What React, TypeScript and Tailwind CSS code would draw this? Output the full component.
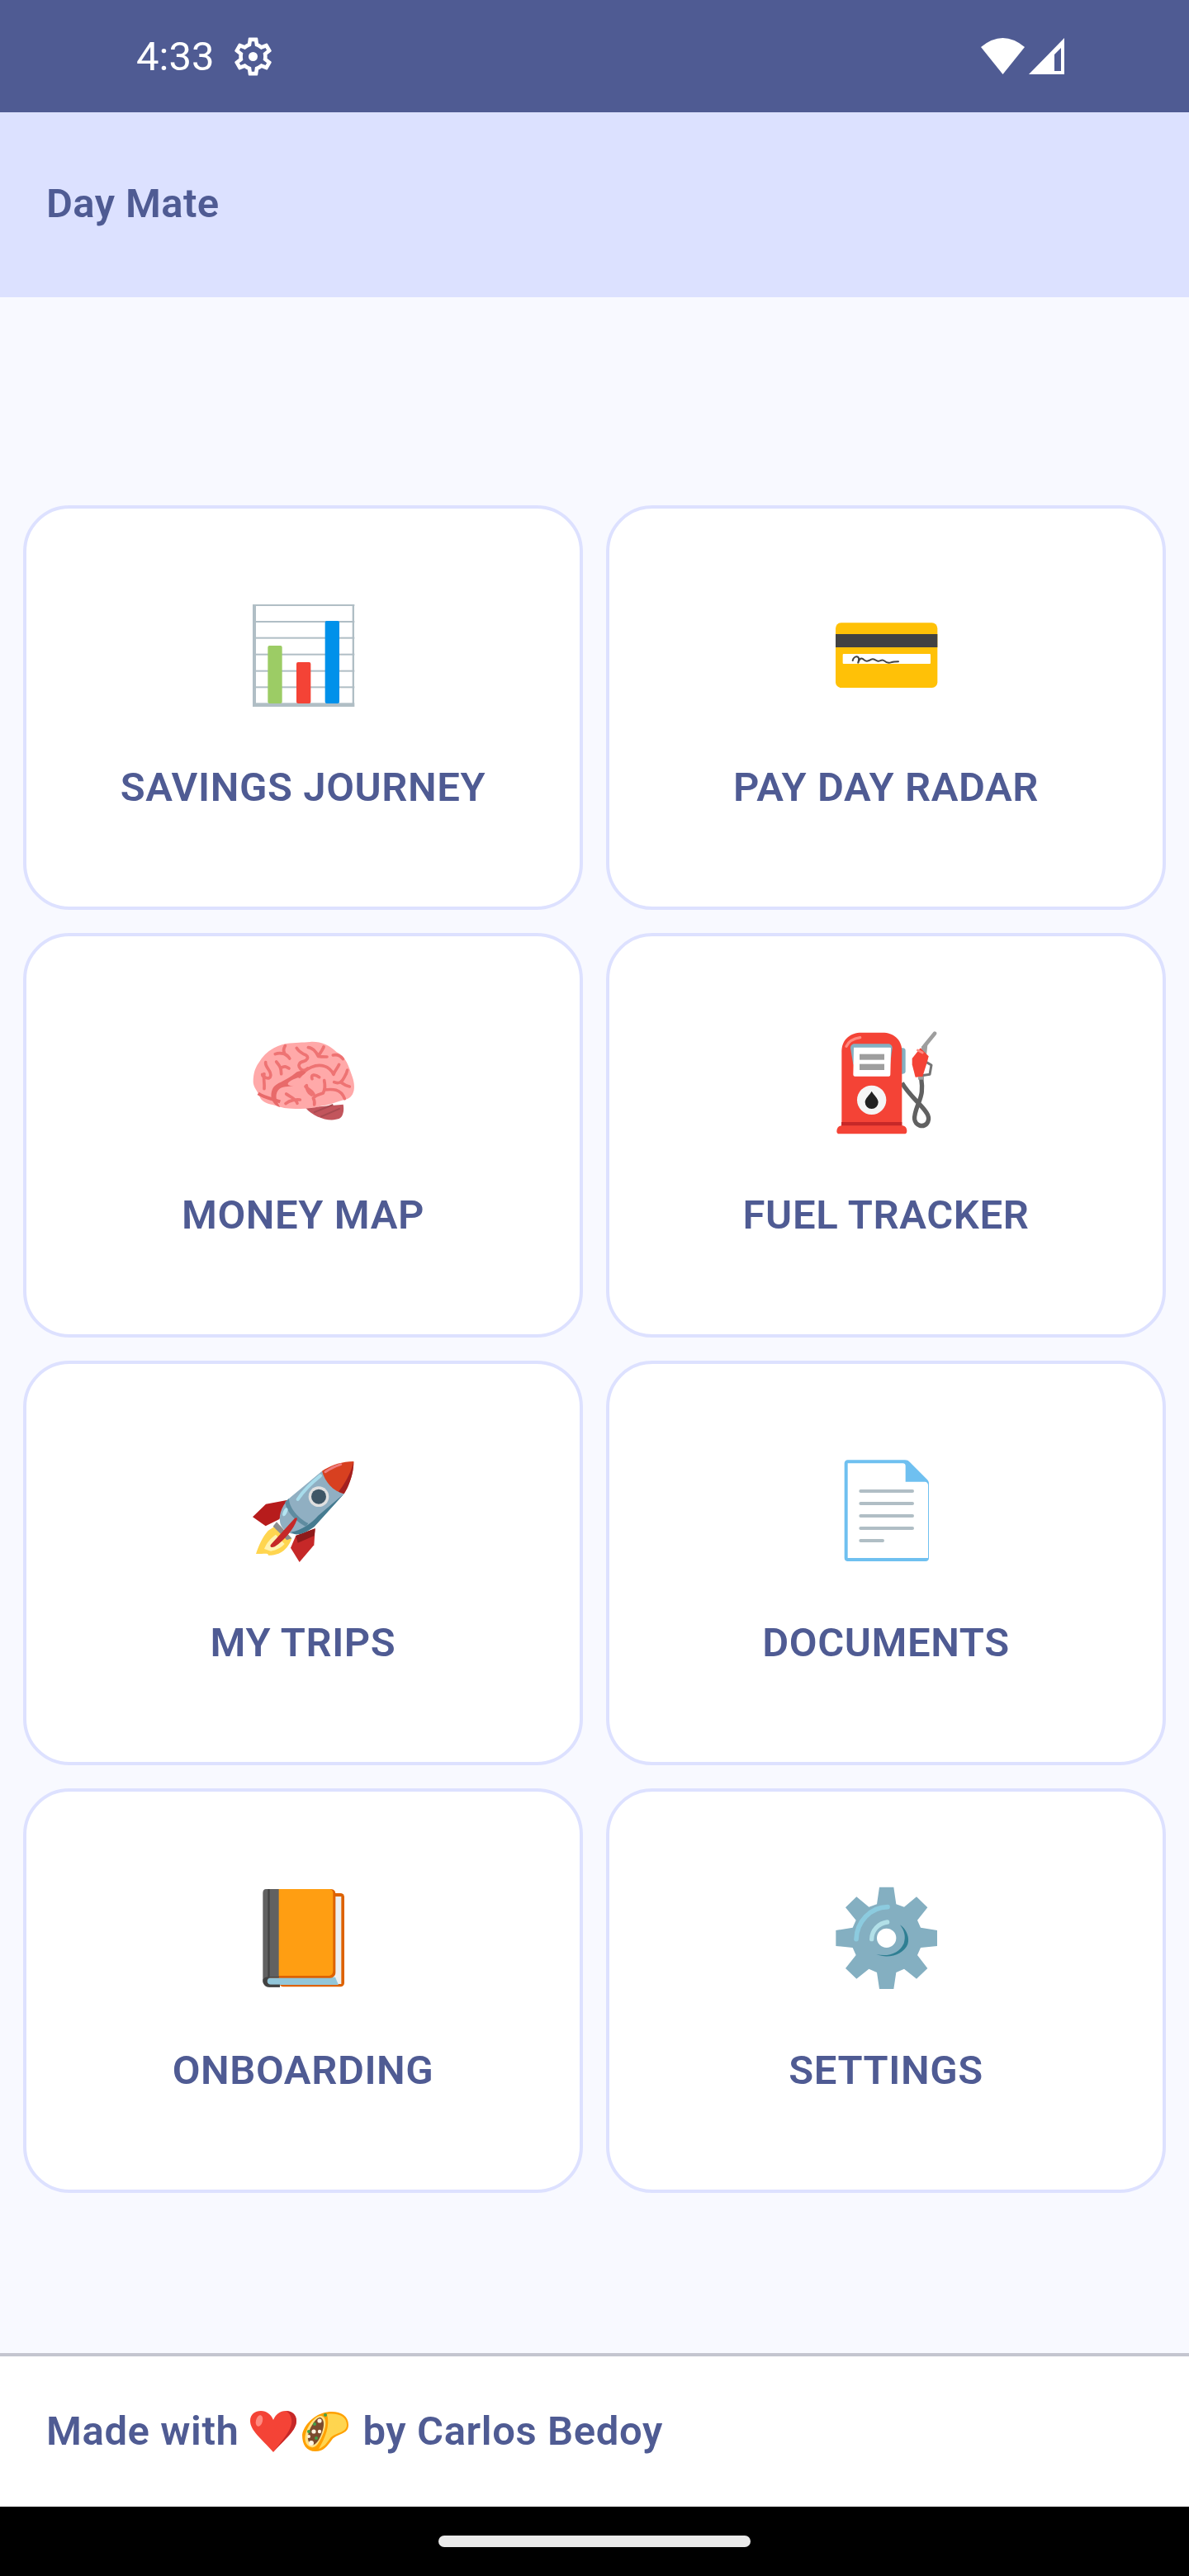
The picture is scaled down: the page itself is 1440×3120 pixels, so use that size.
import type { ReactNode } from 'react'

// emoji drawings: coordinates are 3x pixels, the viewBox picks the 126px square
function Emoji({ box, children }: { box: string; children: ReactNode }) {
  return (
    <svg viewBox={box} className="h-[126px] w-[126px] shrink-0">
      {children}
    </svg>
  )
}

const ChartIcon = () => (
  <Emoji box="102 63 378 378">
    <rect x="111" y="69" width="363" height="363" fill="#fff" />
    <g fill="#B0BEC5">
      <rect x="108" y="66" width="370" height="6" />
      <rect x="108" y="66" width="12" height="372" />
      <rect x="470" y="66" width="7" height="372" />
      <rect x="108" y="126" width="370" height="6" />
      <rect x="108" y="185" width="370" height="6" />
      <rect x="108" y="245" width="370" height="6" />
      <rect x="108" y="305" width="370" height="6" />
      <rect x="108" y="364" width="370" height="6" />
      <rect x="108" y="424" width="370" height="14" />
    </g>
    <rect x="163" y="216" width="52" height="210" rx="6" fill="#9CCC65" />
    <rect x="267" y="276" width="52" height="150" rx="6" fill="#F44336" />
    <rect x="371" y="126" width="52" height="300" rx="6" fill="#0091EA" />
  </Emoji>
)

const CardIcon = () => (
  <Emoji box="90 63 378 378">
    <rect x="96" y="133" width="370" height="236" rx="20" fill="#FFC107" />
    <rect x="96" y="174" width="370" height="48" fill="#424242" />
    <rect x="122" y="246" width="319" height="36" rx="3" fill="#fff" />
    <path
      d="M158 270c2-12 14-18 20-12s-2 22 0 20c4-16 12-20 22-10s18 2 26-2 16 4 24 6 14-10 24 0 20 6 26 4 14-2 24-2"
      fill="none"
      stroke="#424242"
      strokeWidth="6"
      strokeLinecap="round"
    />
  </Emoji>
)

const BrainIcon = () => (
  <Emoji box="102 57 378 378">
    <path d="M300 335c30 35 90 55 125 38 12-8 16-30 12-50z" fill="#C2555C" />
    <path d="M330 352l70-28M355 368l70-30M310 338l60-18" stroke="#A84A50" strokeWidth="6" fill="none" />
    <path
      d="M110 240c0-30 8-52 20-68 22-40 60-62 100-70 36-4 60-4 86-6 40-4 76 16 96 36 34 14 46 54 58 90 12 34 10 70-20 82-40 10-60 22-100 26-30 10-70 10-100 8-30 0-40-6-70-14-20-4-44-14-48-34-6-14-22-30-22-50z"
      fill="#FFA9A9"
    />
    <path d="M128 283c20 14 50 20 80 30" stroke="#E86A6A" strokeWidth="12" fill="none" />
    <g fill="none" stroke="#EE7373" strokeWidth="11" strokeLinecap="round" strokeLinejoin="round">
      <path d="M155 170c-2 20 22 30 18 50-2 16-30 4-30-6" />
      <path d="M150 212c-4 16 2 34 0 54" />
      <path d="M190 140c20-8 44 0 52 16M226 110c-8 14-8 26 6 36" />
      <path d="M194 168c10 12 18 20 18 44M212 190c12-8 18-4 28 2" />
      <path d="M268 118c8 14 20 20 34 26 12 8 2 20-8 22-20 4-22 18-12 28 8 6 14 8 26-2" />
      <path d="M310 116c16 2 28 14 36 32 6-12 14-18 20-34M346 148c10 2 20 2 32 2" />
      <path d="M400 144c16-4 30 4 36 14" />
      <path d="M404 242c18 8 30-2 36-16 6-10 10-16 12-28M430 244c8 6 18 12 30 14" />
      <path d="M278 222c24-30 60-48 90-38 14 4 26 14 34 30M402 214c4-14 14-22 20-36" />
      <path d="M324 230c-6-16 10-18 26-6M368 236c4 20 4 30-4 46M364 282c-16 6-26 6-36 18M368 270c30-4 60-4 74 32M328 300c6 10 6 14 4 24M304 254c0 16 8 28 18 34" />
    </g>
    <path
      d="M176 300c-2-20 2-36 14-46 14-12 44-20 72-44 14-12 30-10 40-4-18 20-42 20-60 34-14 10-2 18 18 14-24 6-46 0-60 18-12 18-6 40 8 60-14 0-26-14-32-32z"
      fill="#E86A6A"
    />
    <g fill="none" stroke="#EE7373" strokeWidth="11" strokeLinecap="round">
      <path d="M230 285c12 10 34 14 40 34M280 306c-12-2-36 0-52 14M300 258c10 12 22 12 30 28" />
    </g>
  </Emoji>
)

const FuelIcon = () => (
  <Emoji box="90 57 378 378">
    <rect x="300" y="118" width="50" height="94" rx="10" fill="#84B0C1" />
    <path d="M337 245c20 34 50 62 70 84 22 24 36 44 20 64-14 14-40 8-44-16-4-28 24-70 26-100 2-20 0-36-2-50" fill="none" stroke="#616161" strokeWidth="16" />
    <path d="M418 112l38-47" stroke="#9E9E9E" strokeWidth="14" strokeLinecap="round" fill="none" />
    <path d="M408 112l22-6-4 40-20-8z" fill="#9E9E9E" />
    <path d="M416 164l28 16-6 34-30 4" fill="none" stroke="#757575" strokeWidth="9" strokeLinejoin="round" />
    <path d="M374 156l30-38 30 30-4 16-18 58-26 2-12-46z" fill="#F44336" />
    <path d="M396 222h21v11h-21z" fill="#9E9E9E" />
    <path d="M394 126l18 9" stroke="#FF8A80" strokeWidth="8" strokeLinecap="round" />
    <path d="M118 402V130c0-42 30-68 72-68h76c42 0 71 26 71 68v272z" fill="#F44336" />
    <path d="M135 112c8-18 24-28 50-32" stroke="#FF8A80" strokeWidth="10" strokeLinecap="round" fill="none" />
    <rect x="117" y="387" width="220" height="16" fill="#C62828" />
    <path d="M100 420c0-12 8-20 20-20h216c12 0 19 8 19 20 0 7-3 10-10 10H110c-7 0-10-3-10-10z" fill="#F44336" />
    <path d="M150 118c0-8 6-15 14-15h124c8 0 14 7 14 15l-8 60H160z" fill="#84B0C1" />
    <path d="M162 116h132c2 0 3 1 3 3l-2 95c0 4-2 7-6 7H166c-4 0-6-3-6-7z" fill="#fff" />
    <rect x="183" y="140" width="90" height="21" fill="#9E9E9E" />
    <rect x="183" y="176" width="90" height="22" fill="#9E9E9E" />
    <circle cx="227" cy="307" r="53" fill="#F5F5F5" />
    <path d="M227 275c8 14 24 26 24 40a24 24 0 0 1-48 0c0-14 16-26 24-40z" fill="#212121" />
  </Emoji>
)

const RocketIcon = () => (
  <Emoji box="102 51 378 378">
    <path d="M120 396c10-30 24-62 44-84l36-24 50 52c-8 24-24 44-42 52-16 8-28 8-42 10-2-10-10-6-46-6z" fill="#FFD54F" />
    <path d="M150 378c8-20 20-36 42-52l32 34c-14 14-28 22-50 26z" fill="#FFF3B0" />
    <path d="M205 270l-50 25-47-33 48-47 80-15z" fill="#B71C1C" />
    <path d="M265 330l70-26-4 60-53 62-32-52z" fill="#C62828" />
    <path d="M265 330l70-26-3 26-60 26z" fill="#8E1A1A" />
    <path d="M195 280l55 60-18 6-50-50z" fill="#8D8D8D" />
    <path d="M360 95L240 195c-30 30-42 70-28 100 14 24 38 34 70 26 20-4 36-14 50-24l108-119z" fill="#90AFC2" />
    <path d="M440 178L332 297c-30 22-52 30-70 28l-16-8c40-6 78-34 100-60z" fill="#457B90" />
    <path d="M240 195c0 30 30 70 70 90l-8 12c-40-20-74-58-76-90z" fill="#5F8CA0" />
    <path d="M360 95c30-20 70-35 115-35 0 40-14 84-35 118-40-10-70-44-80-83z" fill="#D84020" />
    <path d="M475 60c0 40-14 84-35 118l-20-8c24-30 46-70 55-110z" fill="#A32020" />
    <path d="M372 98c18-12 34-20 56-27" stroke="#EE7B7B" strokeWidth="9" strokeLinecap="round" fill="none" />
    <path d="M272 198c22-34 52-62 82-86" stroke="#A8DCEB" strokeWidth="12" strokeLinecap="round" fill="none" />
    <ellipse cx="226" cy="244" rx="7" ry="16" fill="#B4E4F1" transform="rotate(25 226 244)" />
    <circle cx="348" cy="188" r="37" fill="#E0E0E0" />
    <circle cx="348" cy="188" r="27" fill="#3E5666" />
    <path d="M176 360l84-92c8-6 12-2 8 6-10 30-44 74-80 96-14 6-20-2-12-10z" fill="#C62828" />
  </Emoji>
)

const DocIcon = () => (
  <Emoji box="90 51 378 378">
    <path
      d="M140 55h208c8 0 12 2 18 8l62 62c5 5 7 9 7 16v270c0 8-5 12-12 12H140c-7 0-12-4-12-12V67c0-7 5-12 12-12z"
      fill="#6FC0F0"
    />
    <path d="M140 67h200c8 0 10 4 10 10v57h70c8 0 12 6 12 12v265H140z" fill="#fff" />
    <g fill="#B0BEC5">
      <rect x="181" y="162" width="200" height="12" rx="6" />
      <rect x="181" y="207" width="200" height="12" rx="6" />
      <rect x="181" y="252" width="200" height="12" rx="6" />
      <rect x="181" y="297" width="200" height="12" rx="6" />
      <rect x="181" y="342" width="92" height="12" rx="6" />
    </g>
  </Emoji>
)

const BookIcon = () => (
  <Emoji box="102 46 378 378">
    <rect x="205" y="70" width="236" height="340" rx="14" fill="#DD6200" />
    <rect x="200" y="82" width="230" height="318" fill="#ECEFF1" />
    <path d="M160 375h248l12 28H160z" fill="#92C6D9" />
    <path d="M160 55h230c16 0 19 10 19 18v285c0 12-8 20-20 20H160z" fill="#DD6200" />
    <path d="M160 55h225c12 0 15 8 15 16v280c0 14-8 19-18 19H160z" fill="#FF9E12" />
    <path d="M203 55h-46c-8 0-12 6-12 14v318c0 14 10 24 24 24h38v-9h-34c-16 0-16-24 0-24h30z" fill="#616161" />
    <path d="M163 55h7v318c-4 0-6 1-7 3zM145 387c0 14 10 24 24 24h38v-9h-34c-12 0-16-14-9-22 2-2 6-4 10-4h30v-2h-33c-14 0-26 4-26 13z" fill="#424242" />
  </Emoji>
)

const GearIcon = () => (
  <Emoji box="90 46 378 378">
    <path
      d="M255 48h52l9 62 29 10 45-37 40 39-37 46 12 27 60 10v57l-60 6-12 27 37 48-40 38-45-36-29 13-9 60h-52l-9-60-29-13-45 36-40-38 38-48-12-27-61-6v-57l61-10 12-27-38-46 40-39 45 37 29-10z"
      fill="#84AFC1"
    />
    <circle cx="281" cy="233" r="35" fill="#fff" />
    <path d="M171 237c2-62 50-116 114-117" fill="none" stroke="#8CCBDF" strokeWidth="17" strokeLinecap="round" />
    <path d="M227 237c0-30 24-58 57-62" fill="none" stroke="#B2E0E8" strokeWidth="16" strokeLinecap="round" />
    <path d="M330 185c24 16 36 48 28 70-14 36-68 56-114 37 44 10 84-4 100-40 8-24 2-46-14-67z" fill="#2F7F93" />
  </Emoji>
)

const menu = [
  { label: 'SAVINGS JOURNEY', icon: <ChartIcon /> },
  { label: 'PAY DAY RADAR', icon: <CardIcon /> },
  { label: 'MONEY MAP', icon: <BrainIcon /> },
  { label: 'FUEL TRACKER', icon: <FuelIcon /> },
  { label: 'MY TRIPS', icon: <RocketIcon /> },
  { label: 'DOCUMENTS', icon: <DocIcon /> },
  { label: 'ONBOARDING', icon: <BookIcon /> },
  { label: 'SETTINGS', icon: <GearIcon /> },
]

function StatusBar() {
  return (
    <div className="flex h-[136px] items-center justify-between bg-[#4F5B93] pl-[165px] pr-[151px] text-white">
      <div className="flex items-center gap-[20px]">
        <span className="text-[49px] leading-none">4:33</span>
        <svg viewBox="0 0 24 24" className="h-[55px] w-[55px]" fill="#fff">
          <path d="M19.43 12.98c.04-.32.07-.64.07-.98 0-.34-.03-.66-.07-.98l2.11-1.65c.19-.15.24-.42.12-.64l-2-3.46c-.09-.16-.26-.25-.44-.25-.06 0-.12.01-.17.03l-2.49 1c-.52-.4-1.08-.73-1.69-.98l-.38-2.65C14.46 2.18 14.25 2 14 2h-4c-.25 0-.46.18-.49.42l-.38 2.65c-.61.25-1.17.59-1.69.98l-2.49-1c-.06-.02-.12-.03-.18-.03-.17 0-.34.09-.43.25l-2 3.46c-.13.22-.07.49.12.64l2.11 1.65c-.04.32-.07.65-.07.98 0 .33.03.66.07.98l-2.11 1.65c-.19.15-.24.42-.12.64l2 3.46c.09.16.26.25.44.25.06 0 .12-.01.17-.03l2.49-1c.52.4 1.08.73 1.69.98l.38 2.65c.03.24.24.42.49.42h4c.25 0 .46-.18.49-.42l.38-2.65c.61-.25 1.17-.59 1.69-.98l2.49 1c.06.02.12.03.18.03.17 0 .34-.09.43-.25l2-3.46c.12-.22.07-.49-.12-.64l-2.11-1.65zm-1.98-1.71c.04.31.05.52.05.73 0 .21-.02.43-.05.73l-.14 1.13.89.7 1.08.84-.7 1.21-1.27-.51-1.04-.42-.9.68c-.43.32-.84.56-1.25.73l-1.06.43-.16 1.13-.2 1.35h-1.4l-.19-1.35-.16-1.13-1.06-.43c-.43-.18-.83-.41-1.23-.71l-.91-.7-1.06.43-1.27.51-.7-1.21 1.08-.84.89-.7-.14-1.13c-.03-.31-.05-.54-.05-.74s.02-.43.05-.73l.14-1.13-.89-.7-1.08-.84.7-1.21 1.27.51 1.04.42.9-.68c.43-.32.84-.56 1.25-.73l1.06-.43.16-1.13.2-1.35h1.39l.19 1.35.16 1.13 1.06.43c.43.18.83.41 1.23.71l.91.7 1.06-.43 1.27-.51.7 1.21-1.07.85-.89.7.14 1.13z" />
          <circle cx="12" cy="12" r="2.4" />
        </svg>
      </div>
      <div className="flex items-center gap-[5px]">
        <svg viewBox="0 0 53 44" className="h-[44px] w-[53px]" fill="#fff">
          <path d="M0 11Q26.5-11 53 11L26.5 44z" />
        </svg>
        <svg viewBox="0 0 43 44" className="h-[44px] w-[43px]" fill="#fff" fillRule="evenodd">
          <path d="M43 0V44H0zM31 20V40H39V12z" />
        </svg>
      </div>
    </div>
  )
}

export default function App() {
  return (
    <div className="flex h-[3120px] w-[1440px] flex-col overflow-hidden bg-[#F8F9FF] font-['Roboto',sans-serif] text-[#4F5B93]">
      <StatusBar />
      <header className="flex h-[224px] items-center bg-[#DCE1FF] px-[56px]">
        <h1 className="-mt-[2px] text-[49px] font-semibold tracking-[0.4px]">Day Mate</h1>
      </header>

      <main className="flex-1 px-[28px] pt-[252px]">
        <div className="grid grid-cols-2 gap-x-[28px] gap-y-[28px]">
          {menu.map((item) => (
            <div
              key={item.label}
              className="flex h-[490px] flex-col items-center rounded-[56px] border-4 border-[#DDE1FF] bg-white pt-[115px]"
            >
              {item.icon}
              <span className="mt-[67px] text-[49px] font-semibold leading-[60px] tracking-[0.6px]">{item.label}</span>
            </div>
          ))}
        </div>
      </main>

      <footer className="flex h-[186px] items-center border-t-4 border-[#C4C5CF] bg-white px-[56px]">
        <p className="flex items-center text-[49px] font-semibold tracking-[0.6px]">
          Made with
          <svg viewBox="0 0 56 50" className="ml-[14px] h-[50px] w-[56px]">
            <path d="M28 50C14 34 0 24 0 12 0 4 6 0 13 0c7 0 12 4 15 11 3-7 8-11 15-11 7 0 13 4 13 12 0 12-14 22-28 38z" fill="#F44336" />
            <path d="M43 0c7 0 13 4 13 12 0 12-14 22-28 38 12-16 24-28 22-40-1-5-3-8-7-10z" fill="#C62828" />
            <ellipse cx="11" cy="12" rx="4" ry="7" fill="#FF8A80" transform="rotate(15 11 12)" />
          </svg>
          <svg viewBox="0 0 56 48" className="ml-[7px] h-[48px] w-[56px]">
            <path d="M24 2c16-5 32 0 32 14 0 12-14 10-20 18-6 8-10 14-20 14C5 48 0 40 0 28 2 16 14 5 24 2z" fill="#FFA000" />
            <path d="M30 3c14-2 24 3 24 13 0 10-14 9-20 16-5 7-8 11-14 13 8-14 14-28 10-42z" fill="#FFD54F" />
            <path d="M22 5c7 0 8 10 4 20-4 10-9 20-15 18C3 41 2 32 5 24 8 15 16 5 22 5z" fill="#FFE082" />
            <path d="M22 7c5 2 5 10 2 18-3 9-8 17-13 15-5-3-5-11-2-18 3-7 9-16 13-15z" fill="#7B4A2D" />
            <g fill="#FFF3E0">
              <circle cx="21" cy="11" r="2.6" />
              <circle cx="14" cy="24" r="2.6" />
              <circle cx="11" cy="38" r="3" />
              <circle cx="21" cy="24" r="2.2" />
              <circle cx="8" cy="30" r="2" />
            </g>
            <g fill="#43A047">
              <circle cx="15" cy="15" r="2" />
              <circle cx="8" cy="24" r="2" />
              <circle cx="28" cy="4" r="2" />
              <circle cx="17" cy="32" r="2" />
            </g>
          </svg>
          <span className="ml-[17px]">by Carlos Bedoy</span>
        </p>
      </footer>

      <div className="flex h-[84px] items-start justify-center bg-black pt-[35px]">
        <div className="h-[14px] w-[378px] rounded-full bg-[#EAEAEA]" />
      </div>
    </div>
  )
}
